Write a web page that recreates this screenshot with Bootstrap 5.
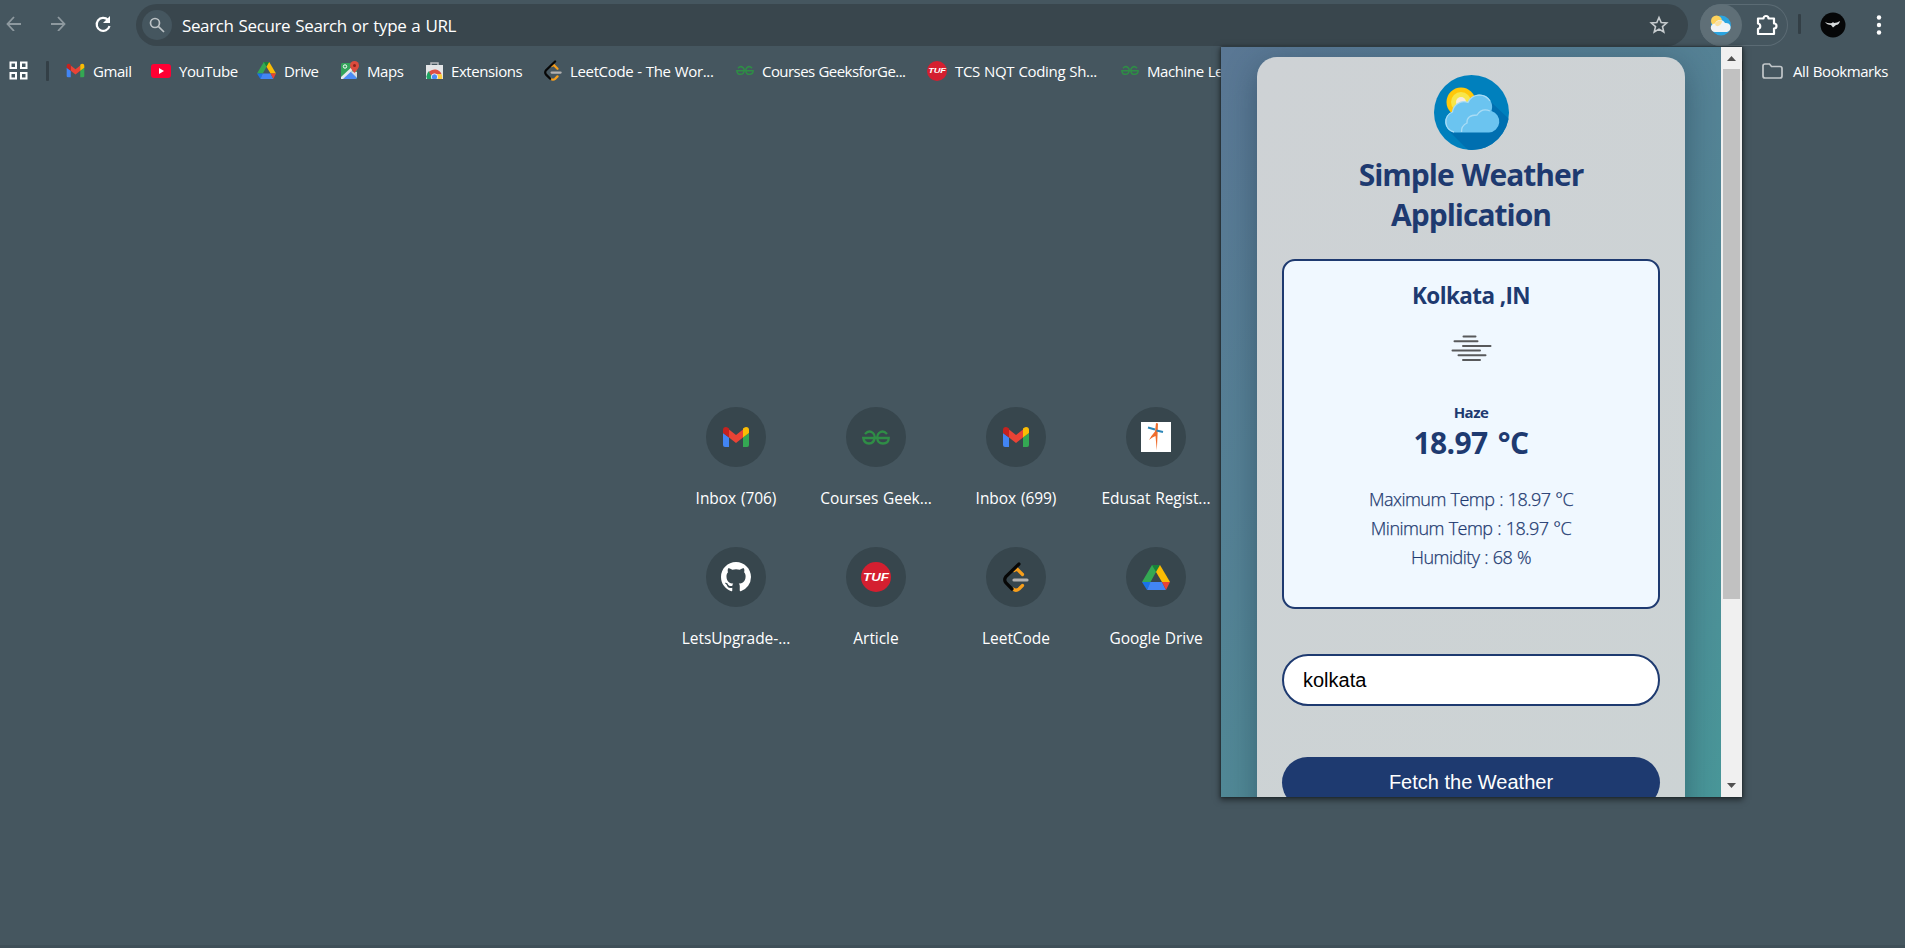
<!DOCTYPE html>
<html lang="en">
<head>
<meta charset="utf-8">
<title>New Tab</title>
<link href="https://cdn.jsdelivr.net/npm/bootstrap@5.3.0/dist/css/bootstrap.min.css" rel="stylesheet">
<style>
body{background:#45565f;color:#fff;font-family:"Open Sans","Noto Sans",sans-serif;height:948px;overflow:hidden;position:relative}
svg{display:block;flex:none}
.toolbar-row{height:46px;padding-left:6px}
.nav-ico{width:16px;height:16px;margin-right:28px}
.omni{width:1552px;height:42px;margin-left:24px;margin-top:4px;background:#39464d;border-radius:21px;padding-left:6px}
.omni-ico{width:30px;height:30px;border-radius:50%;background:#45565f}
.omni-text{font-size:17px;line-height:24px;margin:2px 0 0 10px;letter-spacing:-.38px;word-spacing:1px;white-space:nowrap}
.ext-pill{width:88px;height:42px;margin:4px 0 0 12px;border-radius:21px;box-shadow:inset 0 0 0 1px #5b6b74}
.ext-active{width:42px;height:42px;border-radius:50%;background:#5f6f77}
.sep{width:3px;height:20px;background:#333f46;border-radius:1px}
.bm-row{height:49px;padding-left:9px}
.bm{font-size:15px;letter-spacing:-.42px;word-spacing:.5px;line-height:22px;white-space:nowrap;gap:8px;flex:none;height:22px}
.tiles{width:560px;margin:312px 0 0 666px;row-gap:0}
.tile{width:140px;height:140px}
.disc{width:60px;height:60px;border-radius:50%;background:#37464d}
.cap{font-size:15.5px;line-height:22px;margin-top:20px;letter-spacing:-.05px;word-spacing:.8px;white-space:nowrap;height:23px}
.popup{position:absolute;left:1221px;top:47px;width:521px;height:750px;overflow:hidden;background:#eee}
.pop-shadow{position:absolute;left:1221px;top:47px;width:521px;height:750px;box-shadow:0 0 2px #1b2226,0 2px 6px 1px rgba(0,0,0,.5)}
.scene{width:500px;background:linear-gradient(135deg,#5a7794,#548395 45%,#499799);padding:10px 36px 0}
.wcard{width:428px;height:800px;border-radius:20px 20px 0 0;background:linear-gradient(135deg,#ced2d5,#ccd3d4);box-shadow:0 8px 32px rgba(20,40,60,.4);padding:18px 25px 0;color:#1e3a70}
.title-txt{font-size:30px;line-height:40px;font-weight:700;letter-spacing:-1px;word-spacing:1px;margin:5px 0 0}
.wbox{width:378px;height:350px;border:2px solid #1e3a70;border-radius:13px;background:#f0f8ff;margin-top:24px}
.city{font-size:22.5px;font-weight:700;line-height:32px;letter-spacing:-.6px;margin-top:19px}
.haze{font-size:15px;font-weight:700;line-height:20px;letter-spacing:-.5px;margin-top:40px}
.deg{font-size:30px;font-weight:700;line-height:40px;letter-spacing:-.6px;word-spacing:3px;margin-top:1px}
.fact{font-size:18px;font-weight:300;line-height:29px;letter-spacing:-.52px;word-spacing:.6px;-webkit-text-stroke:.25px #1e3a70}
.field{width:378px;height:52px;border:2px solid #1e3a70;border-radius:26px;background:#fff;color:#000;font:20px/48px "Liberation Sans",sans-serif;padding:0 19px;margin-top:45px}
.go{width:378px;height:51px;border:0;border-radius:26px;background:#1e3a70;color:#fff;font:20px/47px "Liberation Sans",sans-serif;margin-top:51px;padding:0}
.sbar{width:21px;background:#f0f0f0}
.thumb{width:17px;height:530px;background:#c1c1c1}
.foot{position:absolute;left:0;right:0;bottom:0;height:3px;background:#3f4f58}
</style>
</head>
<body>
<svg width="0" height="0" class="position-absolute">
<defs>
<symbol id="gmail" viewBox="0 0 28 22"><path d="M1 7l6 4.500V21H3q-2 0-2-2z" fill="#4285f4"/><path d="M27 7l-6 4.500V21h4q2 0 2-2z" fill="#34a853"/><path d="M7 3.500l7 5.500 7-5.500v8L14 17l-7-5.500z" fill="#ea4335"/><path d="M1 7V4q0-3 3-3 1.500 0 3 1.500v9z" fill="#c5221f"/><path d="M27 7V4q0-3-3-3-1.500 0-3 1.500v9z" fill="#fbbc04"/></symbol>
<symbol id="drive" viewBox="0 0 28 25"><path d="M10 0h8l-4 7-5.500 10H0z" fill="#34a853"/><path d="M10 0h8l-4 7z" fill="#188038"/><path d="M18 0l10 17h-8L14 7z" fill="#fbbc04"/><path d="M0 17h9l-4 8z" fill="#1a73e8"/><path d="M8.500 17H20l4 8H5z" fill="#4285f4"/><path d="M20 17h8l-4 8z" fill="#ea4335"/></symbol>
<symbol id="gfg" viewBox="0 0 28 15"><g fill="none" stroke="#2f8d46" stroke-width="2.300"><path d="M3 4Q7-.500 11 3q2 2 1.700 4.500Q12 13.500 7 13.500T1.300 8H26.700q0 5.500-5.700 5.500T15.300 7.500Q15 5 17 3q4-3.500 8 1"/></g></symbol>
<symbol id="leet" viewBox="0 0 26 30"><g fill="none" stroke-linecap="round" stroke-width="3.200"><path d="M11 8.500l3-1.500 5.500 5.500M19.500 23.500L16 27q-3 2.500-6 0" stroke="#f89f1b"/><path d="M16 2L3 14.500Q.500 18 3 21l6 6" stroke="#070706"/><path d="M11 18h13" stroke="#b3b1b0"/></g></symbol>
<symbol id="tuf" viewBox="0 0 30 30"><circle cx="15" cy="15" r="15" fill="#d41f30"/><text x="15" y="18.500" text-anchor="middle" font-family="Liberation Sans" font-style="italic" font-weight="700" font-size="10" fill="#fff" textLength="26" lengthAdjust="spacingAndGlyphs">TUF</text></symbol>
</defs></svg>

<header class="toolbar-row d-flex align-items-center">
<svg class="nav-ico" viewBox="0 0 16 16" fill="none" stroke="#8e999f" stroke-width="1.800"><path d="M15 9H1.500M8 2L1.500 9 8 16"/></svg>
<svg class="nav-ico" viewBox="0 0 16 16" fill="none" stroke="#8e999f" stroke-width="1.800"><path d="M1 9h13.500M8 2l6.500 7L8 16"/></svg>
<svg width="18" height="18" viewBox="0 0 18 18" style="margin-top:2px"><path d="M15.500 11A6.500 6.500 0 1 1 14 5" fill="none" stroke="#fff" stroke-width="2.200"/><path d="M16 1v7H9z" fill="#fff"/></svg>
<div class="omni d-flex align-items-center">
<div class="omni-ico d-flex align-items-center justify-content-center"><svg width="16" height="16" viewBox="0 0 16 16" fill="none" stroke="#bcc2c5" stroke-width="1.700"><circle cx="6" cy="6" r="4.500"/><path d="M9.300 9.300l5.700 5.700"/></svg></div>
<span class="omni-text">Search Secure Search or type a URL</span>
<svg class="ms-auto" style="margin-right:19px" width="20" height="20" viewBox="0 0 20 20" fill="none" stroke="#c7cccf" stroke-width="1.600"><path d="M10 2.500l2.200 5 5.500.500-4.200 3.600 1.300 5.400-4.800-2.900L5.200 17l1.300-5.400L2.300 8l5.500-.500z"/></svg>
</div>
<div class="ext-pill d-flex align-items-center">
<div class="ext-active d-flex align-items-center justify-content-center"><svg width="22" height="22" viewBox="0 0 22 22"><circle cx="11" cy="11.500" r="10" fill="#2ba4e0"/><circle cx="6.500" cy="7" r="5.500" fill="#fdd25c"/><path d="M5 18a4.200 4.200 0 0 1 0-8.400 5.500 5.500 0 0 1 10-.600 4.600 4.600 0 0 1 2 9z" fill="#f1f3f5"/><path d="M5 9.500a5.500 5.500 0 0 1 7-2.500q-.200 4-4.500 5.300Q5 12 5 9.500z" fill="#fbe0a0"/></svg></div>
<svg style="margin-left:14px" width="22" height="22" viewBox="0 0 22 22"><path d="M2 4.500h5.500a2.500 2.500 0 0 1 5 0H18v5a2.500 2.500 0 0 1 0 5V20H2v-5a2.800 2.800 0 0 0 0-5.500z" fill="none" stroke="#fff" stroke-width="2.200" stroke-linejoin="round"/></svg>
</div>
<div class="sep" style="margin:2px 0 0 10px"></div>
<svg style="margin:3px 0 0 19px" width="26" height="26" viewBox="0 0 26 26"><circle cx="13" cy="13" r="12.500" fill="#050607"/><path d="M5 10q4 2 7 1l1-1 1 1q3 0 6-2-1 4-4 4l-3 2.500-2-2.500q-4 0-6-3z" fill="#d7dadb"/></svg>
<svg style="margin:3px 0 0 30px" width="6" height="20" viewBox="0 0 6 20" fill="#fff"><circle cx="3" cy="2.500" r="2.200"/><circle cx="3" cy="10" r="2.200"/><circle cx="3" cy="17.500" r="2.200"/></svg>
</header>

<nav class="bm-row d-flex align-items-center">
<svg width="19" height="19" viewBox="0 0 19 19" fill="none" stroke="#fff" stroke-width="2"><path d="M1.500 1.500h5.500V7H1.500zM12 1.500h5.500V7H12zM1.500 12h5.500v5.500H1.500zM12 12h5.500v5.500H12z"/></svg>
<div class="sep" style="margin-left:18px"></div>
<div class="bm d-flex align-items-center" style="width:85px;margin-left:17px"><svg width="19" height="15"><use href="#gmail"/></svg>Gmail</div>
<div class="bm d-flex align-items-center" style="width:106px"><svg width="20" height="14"><rect width="20" height="14" rx="3" fill="#f03"/><path d="M8 4l5 3-5 3z" fill="#fff"/></svg>YouTube</div>
<div class="bm d-flex align-items-center" style="width:84px"><svg width="19" height="17"><use href="#drive"/></svg>Drive</div>
<div class="bm d-flex align-items-center" style="width:85px"><svg width="18" height="19" viewBox="0 0 18 19"><rect y="2" width="16" height="16" rx="1.500" fill="#34a35a"/><path d="M1 18L9 9l7 8-1 1z" fill="#4f8df5"/><path d="M0 16L14 3l2 2L2 18H0z" fill="#e8eaed"/><path d="M9 10l7 7V11z" fill="#dadce0"/><circle cx="4" cy="5.500" r="1.700" fill="none" stroke="#fff"/><path d="M13.500 12Q9 7 9 4.500a4.500 4.500 0 0 1 9 0Q18 7 13.500 12z" fill="#dd4b3e"/><circle cx="13.500" cy="4.500" r="1.500" fill="#8c241c"/></svg>Maps</div>
<div class="bm d-flex align-items-center" style="width:118px"><svg width="17" height="17" viewBox="0 0 17 17"><path d="M5 3V1h7v2" fill="none" stroke="#b8bcc0" stroke-width="1.500"/><path d="M0 3h17v14H0z" fill="#e4e6e8"/><path d="M1 17A7.500 7.500 0 0 1 3 9l4 5v3z" fill="#1da462"/><path d="M3 10a7.500 7.500 0 0 1 12.500 2H8l-2 3z" fill="#dd4f43"/><path d="M9 12h6.500q1 2 .700 5H9z" fill="#ffcd40"/><circle cx="8.500" cy="15" r="3.200" fill="#4d8df5" stroke="#fff" stroke-width=".8"/></svg>Extensions</div>
<div class="bm d-flex align-items-center" style="width:192px;letter-spacing:-.35px"><svg width="18" height="21"><use href="#leet"/></svg>LeetCode - The Wor...</div>
<div class="bm d-flex align-items-center" style="width:191px;letter-spacing:-.55px"><svg width="18" height="11"><use href="#gfg"/></svg>Courses GeeksforGe...</div>
<div class="bm d-flex align-items-center" style="width:194px;letter-spacing:-.32px"><svg width="20" height="20"><use href="#tuf"/></svg>TCS NQT Coding Sh...</div>
<div class="bm d-flex align-items-center"><svg width="18" height="11"><use href="#gfg"/></svg>Machine Learning</div>
<div class="sep ms-auto" style="margin-right:19px"></div>
<div class="bm d-flex align-items-center" style="margin-right:17px;gap:10px"><svg width="21" height="16" viewBox="0 0 21 16"><path d="M1 3q0-2 2-2h4.500l2 2.500H18q2 0 2 2V13q0 2-2 2H3q-2 0-2-2z" fill="none" stroke="#c2c7ca" stroke-width="1.700"/></svg>All Bookmarks</div>
</nav>

<main class="tiles d-flex flex-wrap">
<div class="tile d-flex flex-column align-items-center"><div class="disc d-flex align-items-center justify-content-center"><svg width="28" height="22"><use href="#gmail"/></svg></div><div class="cap">Inbox (706)</div></div>
<div class="tile d-flex flex-column align-items-center"><div class="disc d-flex align-items-center justify-content-center"><svg width="28" height="15"><use href="#gfg"/></svg></div><div class="cap">Courses Geek...</div></div>
<div class="tile d-flex flex-column align-items-center"><div class="disc d-flex align-items-center justify-content-center"><svg width="28" height="22"><use href="#gmail"/></svg></div><div class="cap">Inbox (699)</div></div>
<div class="tile d-flex flex-column align-items-center"><div class="disc d-flex align-items-center justify-content-center"><svg width="30" height="30" viewBox="0 0 30 30"><path fill="#fff" d="M0 0h30v30H0z"/><path d="M15 1l2 .500-.500 12.500-.700 14.500L14.500 14q-3 1-6.500 4 2-4 6-8.500z" fill="#ef6d2d"/><path d="M7 5.500l7 2M15.500 8.500l6.500 1.500" stroke="#2b86b8" stroke-width="2" fill="none"/></svg></div><div class="cap">Edusat Regist...</div></div>
<div class="tile d-flex flex-column align-items-center"><div class="disc d-flex align-items-center justify-content-center"><svg width="30" height="30" viewBox="0 0 16 16"><path fill="#fff" d="M8 0C3.580 0 0 3.580 0 8c0 3.540 2.290 6.530 5.470 7.590.4.070.55-.17.55-.38 0-.19-.01-.82-.01-1.490-2.010.37-2.530-.49-2.690-.94-.09-.23-.48-.94-.82-1.130-.28-.15-.68-.52-.01-.53.63-.01 1.080.58 1.230.82.72 1.210 1.870.87 2.330.66.07-.52.28-.87.51-1.070-1.780-.2-3.640-.89-3.640-3.950 0-.87.31-1.590.82-2.150-.08-.2-.36-1.020.08-2.120 0 0 .67-.21 2.200.82.64-.18 1.320-.27 2-.27s1.360.09 2 .27c1.530-1.040 2.200-.82 2.200-.82.44 1.100.16 1.920.08 2.120.51.56.82 1.270.82 2.150 0 3.070-1.870 3.750-3.650 3.950.29.25.54.73.54 1.480 0 1.070-.01 1.930-.01 2.200 0 .21.15.46.55.38A8.010 8.010 0 0 0 16 8c0-4.420-3.580-8-8-8z"/></svg></div><div class="cap">LetsUpgrade-...</div></div>
<div class="tile d-flex flex-column align-items-center"><div class="disc d-flex align-items-center justify-content-center"><svg width="30" height="30"><use href="#tuf"/></svg></div><div class="cap">Article</div></div>
<div class="tile d-flex flex-column align-items-center"><div class="disc d-flex align-items-center justify-content-center"><svg width="26" height="30"><use href="#leet"/></svg></div><div class="cap">LeetCode</div></div>
<div class="tile d-flex flex-column align-items-center"><div class="disc d-flex align-items-center justify-content-center"><svg width="28" height="25"><use href="#drive"/></svg></div><div class="cap">Google Drive</div></div>
</main>

<div class="pop-shadow"></div>
<section class="popup d-flex">
<div class="scene">
<div class="wcard d-flex flex-column align-items-center text-center">
<svg width="75" height="75" viewBox="0 0 75 75"><defs><clipPath id="disc"><circle cx="37.500" cy="37.500" r="37.500"/></clipPath></defs><g clip-path="url(#disc)"><path fill="#0080bd" d="M0 0h75v75H0z"/><path d="M16 57l20 20h40V45L57 27z" fill="#006fb0"/><circle cx="27" cy="27" r="14.500" fill="#ffc80a"/><circle cx="27" cy="27" r="10" fill="#f7e64a"/><circle cx="27" cy="27" r="5" fill="#f6ebdc"/></g><path d="M20.500 57.500a10.500 10.500 0 0 1-2-20.500A11.500 11.500 0 0 1 34 27.500a12.500 12.500 0 0 1 23.500 8.500A11 11 0 0 1 55 57.500z" fill="#6bc4f0"/><path d="M20 57a10.500 10.500 0 0 1-1.500-20A11.500 11.500 0 0 1 34 27.500 12.500 12.500 0 0 1 56 26M27.500 57q-.500-6 5.500-9-.500-8 10-8 5-7.500 13-4" fill="none" stroke="#a9dcf5" stroke-width="1.300"/></svg>
<h1 class="title-txt">Simple Weather<br>Application</h1>
<div class="wbox d-flex flex-column align-items-center">
<div class="city">Kolkata ,IN</div>
<svg style="margin-top:23px" width="41" height="27" viewBox="0 0 41 27" stroke="#58595b" stroke-width="2" stroke-linecap="round"><path d="M12.500 1.500h12M3.500 6.200h23M12 11h27.500M1.500 15.500H29M7.500 20.200h27M12 25h17"/></svg>
<div class="haze">Haze</div>
<div class="deg">18.97 °C</div>
<div class="fact" style="margin-top:22px">Maximum Temp : 18.97 °C</div>
<div class="fact">Minimum Temp : 18.97 °C</div>
<div class="fact">Humidity : 68 %</div>
</div>
<input class="field" value="kolkata" aria-label="City">
<button class="go flex-shrink-0">Fetch the Weather</button>
</div>
</div>
<div class="sbar d-flex flex-column align-items-center">
<svg width="9" height="5" style="margin:9px 0 8px"><path d="M0 5l4.500-5L9 5z" fill="#505050"/></svg>
<div class="thumb"></div>
<svg class="mt-auto" width="9" height="5" style="margin-bottom:9px"><path d="M0 0l4.500 5L9 0z" fill="#505050"/></svg>
</div>
</section>
<div class="foot"></div>
<script src="https://cdn.jsdelivr.net/npm/bootstrap@5.3.0/dist/js/bootstrap.bundle.min.js"></script>
</body>
</html>
